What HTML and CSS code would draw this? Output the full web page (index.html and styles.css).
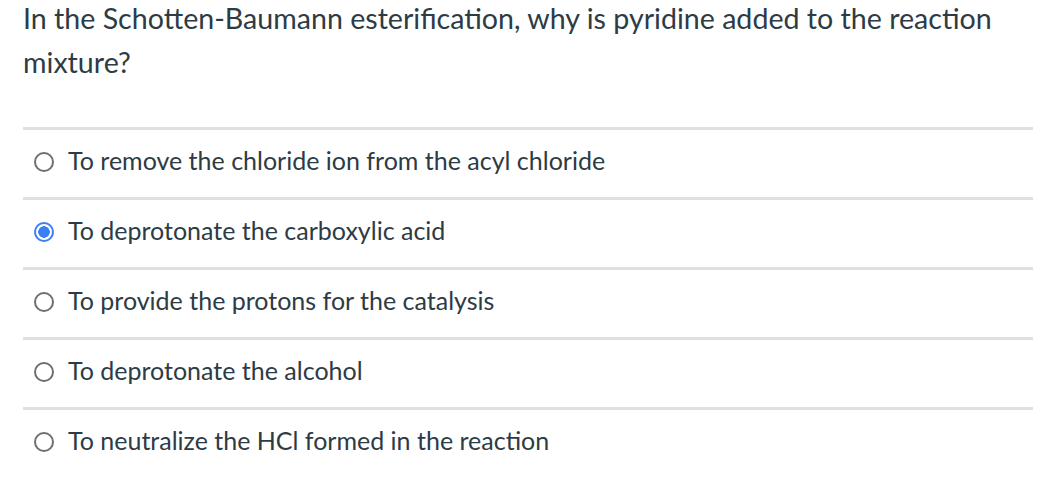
FILE: index.html
```html
<!DOCTYPE html>
<html lang="en">
<head>
<meta charset="utf-8">
<title>Question</title>
<link rel="stylesheet" href="styles.css">
</head>
<body>
<div class="question">
  <p class="prompt">In the Schotten-Baumann esterification, why is pyridine added to the reaction mixture?</p>
  <div class="answers">
    <label class="answer"><span class="radio"></span><span class="text">To remove the chloride ion from the acyl chloride</span></label>
    <label class="answer"><span class="radio checked"></span><span class="text">To deprotonate the carboxylic acid</span></label>
    <label class="answer"><span class="radio"></span><span class="text">To provide the protons for the catalysis</span></label>
    <label class="answer"><span class="radio"></span><span class="text">To deprotonate the alcohol</span></label>
    <label class="answer"><span class="radio"></span><span class="text">To neutralize the HCl formed in the reaction</span></label>
  </div>
</div>
</body>
</html>
```

FILE: styles.css
```css
html, body {
  margin: 0;
  padding: 0;
  background: #ffffff;
}
body {
  font-family: Lato, "Noto Sans", sans-serif;
  color: #2d3b45;
}
.question {
  padding: 0 9px 0 23px;
}
.prompt {
  margin: -4px 0 0 0;
  font-size: 28.6px;
  line-height: 44px;
}
.answers {
  margin-top: 43px;
}
.answer {
  box-sizing: border-box;
  display: flex;
  align-items: center;
  height: 70px;
  border-top: 3px solid #e0e0e0;
  padding: 0 0 3px 11px;
  gap: 14px;
}
.radio {
  box-sizing: border-box;
  width: 20px;
  height: 20px;
  border-radius: 50%;
  border: 2px solid #6f6f6f;
  background: #fff;
  flex: none;
}
.radio.checked {
  border-color: #3b7ff5;
  background: radial-gradient(circle, #3b7ff5 0 5.5px, #fff 6px);
}
.text {
  font-size: 25px;
  line-height: 28px;
  margin-bottom: 5px;
}
```
